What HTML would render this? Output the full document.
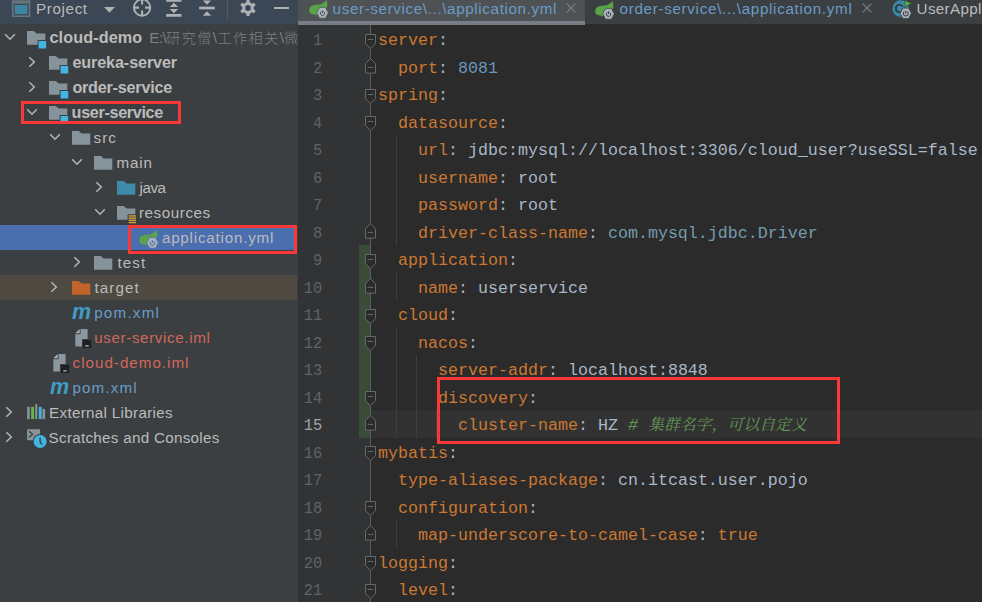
<!DOCTYPE html>
<html lang="zh">
<head>
<meta charset="utf-8">
<title>cloud-demo – application.yml</title>
<style>
*{box-sizing:border-box;margin:0;padding:0}
html,body{width:982px;height:602px;overflow:hidden;background:#2b2b2b}
body{position:relative;font-family:"Liberation Sans","Noto Sans CJK SC",sans-serif;color:#bbbbbb}
svg{position:absolute;overflow:visible}
#side{position:absolute;left:0;top:0;width:298px;height:602px;background:#3c3f41;overflow:hidden}
#head{position:absolute;left:0;top:0;width:298px;height:23.5px;background:#3b4754}
.ttl{position:absolute;left:36.1px;top:-1.6px;font-size:15.2px;letter-spacing:0.62px;line-height:22px;color:#bbbbbb;white-space:nowrap}
.row{position:absolute;left:0;width:298px;height:25px}
.t{position:absolute;top:0;height:26px;line-height:25.6px;font-size:15.2px;white-space:nowrap;color:#bbbbbb}
.t.b{font-weight:bold;font-size:16.2px}
.t.blue{color:#6a9bc6}
.t.red{color:#d1675a}
.gray{color:#7e7e7e;font-weight:300;font-size:14.2px;letter-spacing:1.4px;margin-left:7px}
.gl{font-size:15.4px;letter-spacing:-0.7px;font-weight:normal}
.bs{font-size:15.4px;letter-spacing:0;font-weight:normal;margin:0 0.3px 0 0}
.sel{background:#4b6eaf;width:297px}
.excl{background:#4e4a41;width:297.4px}
.redbox{position:absolute;border:3px solid #fb3838}
#tabs{position:absolute;left:298px;top:0;width:684px;height:25px;overflow:hidden}
#tabbg{position:absolute;left:0;top:0;width:684px;height:24px;background:#3c3f41}
#tab1{position:absolute;left:0;top:0;width:287px;height:25px;background:#4e5254;border-bottom:4.3px solid #777d86}
.tabt{position:absolute;top:-1.6px;font-size:15.2px;line-height:22px;white-space:nowrap;color:#6a9bc6}
.tabx{position:absolute;top:-3px;font-size:16px;line-height:22px;color:#777b7e}
#gut{position:absolute;left:298px;top:25px;width:72.4px;height:577px;background:#313335}
#ed{position:absolute;left:298px;top:25px;width:684px;height:577px;background:#2b2b2b}
.ln{position:absolute;left:298px;width:24.2px;transform:scaleX(0.92);transform-origin:100% 50%;text-align:right;font-family:"Liberation Mono",monospace;font-size:16.67px;line-height:27.5px;height:27.5px;color:#606366}
.ln.cur{color:#a4a3a3}
.cl{position:absolute;left:378px;white-space:pre;font-family:"Liberation Mono",monospace;font-size:16.67px;line-height:27.5px;height:27.5px;color:#a9b7c6}
.k{color:#cc7832}
.n{color:#6897bb}
.c{color:#629755;font-style:italic;font-family:"Liberation Mono","Noto Serif CJK SC",serif}
.cj{font-size:15.9px}
.cls{color:#739cb0}
.curline{position:absolute;left:360px;width:622px;background:#323232}
.vcs{position:absolute;left:359.2px;width:11px;background:#384c38}
.guide{position:absolute;width:1px;background:#3e3e3e}
.foldline{position:absolute;left:369.9px;width:1px;background:#5a5d5f}
</style>
</head>
<body>
<div id="ed"></div><div id="gut"></div><div class="curline" style="top:410.00px;height:27.5px"></div><div class="vcs" style="top:245.00px;height:192.50px"></div><div class="foldline" style="top:25px;height:577px"></div><div class="guide" style="left:396.2px;top:135.00px;height:110.00px"></div><div class="guide" style="left:396.2px;top:272.50px;height:27.50px"></div><div class="guide" style="left:396.2px;top:327.50px;height:110.00px"></div><div class="guide" style="left:416.2px;top:355.00px;height:82.50px"></div><div class="guide" style="left:436.2px;top:410.00px;height:27.50px"></div><div class="guide" style="left:396.2px;top:520.00px;height:27.50px"></div><div class="guide" style="left:396.2px;top:602.50px;height:27.50px"></div><div class="ln" style="top:27.00px">1</div><div class="cl" style="top:27.00px"><span class="k">server</span>:</div><svg style="left:364.9px;top:33.75px" width="11" height="16" viewBox="0 0 11 16"><path d="M0.5 0.5 H10.5 V9.7 L5.5 14.6 L0.5 9.7 Z" fill="#2b2b2b" stroke="#66696b" stroke-width="1"/><path d="M2.6 5.5 H8.4" stroke="#66696b" stroke-width="1"/></svg><div class="ln" style="top:54.50px">2</div><div class="cl" style="top:54.50px">  <span class="k">port</span>: <span class="n">8081</span></div><svg style="left:364.9px;top:57.90px" width="11" height="16" viewBox="0 0 11 16"><path d="M0.5 15.1 H10.5 V5.8 L5.5 0.4 L0.5 5.8 Z" fill="#2b2b2b" stroke="#66696b" stroke-width="1"/><path d="M2.6 9.4 H8.4" stroke="#66696b" stroke-width="1"/></svg><div class="ln" style="top:82.00px">3</div><div class="cl" style="top:82.00px"><span class="k">spring</span>:</div><svg style="left:364.9px;top:88.75px" width="11" height="16" viewBox="0 0 11 16"><path d="M0.5 0.5 H10.5 V9.7 L5.5 14.6 L0.5 9.7 Z" fill="#2b2b2b" stroke="#66696b" stroke-width="1"/><path d="M2.6 5.5 H8.4" stroke="#66696b" stroke-width="1"/></svg><div class="ln" style="top:109.50px">4</div><div class="cl" style="top:109.50px">  <span class="k">datasource</span>:</div><svg style="left:364.9px;top:116.25px" width="11" height="16" viewBox="0 0 11 16"><path d="M0.5 0.5 H10.5 V9.7 L5.5 14.6 L0.5 9.7 Z" fill="#2b2b2b" stroke="#66696b" stroke-width="1"/><path d="M2.6 5.5 H8.4" stroke="#66696b" stroke-width="1"/></svg><div class="ln" style="top:137.00px">5</div><div class="cl" style="top:137.00px">    <span class="k">url</span>: jdbc:mysql://localhost:3306/cloud_user?useSSL=false</div><div class="ln" style="top:164.50px">6</div><div class="cl" style="top:164.50px">    <span class="k">username</span>: root</div><div class="ln" style="top:192.00px">7</div><div class="cl" style="top:192.00px">    <span class="k">password</span>: root</div><div class="ln" style="top:219.50px">8</div><div class="cl" style="top:219.50px">    <span class="k">driver-class-name</span>: <span class="cls">com.mysql.jdbc.Driver</span></div><svg style="left:364.9px;top:222.90px" width="11" height="16" viewBox="0 0 11 16"><path d="M0.5 15.1 H10.5 V5.8 L5.5 0.4 L0.5 5.8 Z" fill="#2b2b2b" stroke="#66696b" stroke-width="1"/><path d="M2.6 9.4 H8.4" stroke="#66696b" stroke-width="1"/></svg><div class="ln" style="top:247.00px">9</div><div class="cl" style="top:247.00px">  <span class="k">application</span>:</div><svg style="left:364.9px;top:253.75px" width="11" height="16" viewBox="0 0 11 16"><path d="M0.5 0.5 H10.5 V9.7 L5.5 14.6 L0.5 9.7 Z" fill="#2b2b2b" stroke="#66696b" stroke-width="1"/><path d="M2.6 5.5 H8.4" stroke="#66696b" stroke-width="1"/></svg><div class="ln" style="top:274.50px">10</div><div class="cl" style="top:274.50px">    <span class="k">name</span>: userservice</div><svg style="left:364.9px;top:277.90px" width="11" height="16" viewBox="0 0 11 16"><path d="M0.5 15.1 H10.5 V5.8 L5.5 0.4 L0.5 5.8 Z" fill="#2b2b2b" stroke="#66696b" stroke-width="1"/><path d="M2.6 9.4 H8.4" stroke="#66696b" stroke-width="1"/></svg><div class="ln" style="top:302.00px">11</div><div class="cl" style="top:302.00px">  <span class="k">cloud</span>:</div><svg style="left:364.9px;top:308.75px" width="11" height="16" viewBox="0 0 11 16"><path d="M0.5 0.5 H10.5 V9.7 L5.5 14.6 L0.5 9.7 Z" fill="#2b2b2b" stroke="#66696b" stroke-width="1"/><path d="M2.6 5.5 H8.4" stroke="#66696b" stroke-width="1"/></svg><div class="ln" style="top:329.50px">12</div><div class="cl" style="top:329.50px">    <span class="k">nacos</span>:</div><svg style="left:364.9px;top:336.25px" width="11" height="16" viewBox="0 0 11 16"><path d="M0.5 0.5 H10.5 V9.7 L5.5 14.6 L0.5 9.7 Z" fill="#2b2b2b" stroke="#66696b" stroke-width="1"/><path d="M2.6 5.5 H8.4" stroke="#66696b" stroke-width="1"/></svg><div class="ln" style="top:357.00px">13</div><div class="cl" style="top:357.00px">      <span class="k">server-addr</span>: localhost:8848</div><div class="ln" style="top:384.50px">14</div><div class="cl" style="top:384.50px">      <span class="k">discovery</span>:</div><svg style="left:364.9px;top:391.25px" width="11" height="16" viewBox="0 0 11 16"><path d="M0.5 0.5 H10.5 V9.7 L5.5 14.6 L0.5 9.7 Z" fill="#2b2b2b" stroke="#66696b" stroke-width="1"/><path d="M2.6 5.5 H8.4" stroke="#66696b" stroke-width="1"/></svg><div class="ln cur" style="top:412.00px">15</div><div class="cl" style="top:412.00px">        <span class="k">cluster-name</span>: HZ <span class="c"># <span class="cj">集群名字，可以自定义</span></span></div><svg style="left:364.9px;top:415.40px" width="11" height="16" viewBox="0 0 11 16"><path d="M0.5 15.1 H10.5 V5.8 L5.5 0.4 L0.5 5.8 Z" fill="#2b2b2b" stroke="#66696b" stroke-width="1"/><path d="M2.6 9.4 H8.4" stroke="#66696b" stroke-width="1"/></svg><div class="ln" style="top:439.50px">16</div><div class="cl" style="top:439.50px"><span class="k">mybatis</span>:</div><svg style="left:364.9px;top:446.25px" width="11" height="16" viewBox="0 0 11 16"><path d="M0.5 0.5 H10.5 V9.7 L5.5 14.6 L0.5 9.7 Z" fill="#2b2b2b" stroke="#66696b" stroke-width="1"/><path d="M2.6 5.5 H8.4" stroke="#66696b" stroke-width="1"/></svg><div class="ln" style="top:467.00px">17</div><div class="cl" style="top:467.00px">  <span class="k">type-aliases-package</span>: cn.itcast.user.pojo</div><div class="ln" style="top:494.50px">18</div><div class="cl" style="top:494.50px">  <span class="k">configuration</span>:</div><svg style="left:364.9px;top:501.25px" width="11" height="16" viewBox="0 0 11 16"><path d="M0.5 0.5 H10.5 V9.7 L5.5 14.6 L0.5 9.7 Z" fill="#2b2b2b" stroke="#66696b" stroke-width="1"/><path d="M2.6 5.5 H8.4" stroke="#66696b" stroke-width="1"/></svg><div class="ln" style="top:522.00px">19</div><div class="cl" style="top:522.00px">    <span class="k">map-underscore-to-camel-case</span>: <span class="k">true</span></div><svg style="left:364.9px;top:525.40px" width="11" height="16" viewBox="0 0 11 16"><path d="M0.5 15.1 H10.5 V5.8 L5.5 0.4 L0.5 5.8 Z" fill="#2b2b2b" stroke="#66696b" stroke-width="1"/><path d="M2.6 9.4 H8.4" stroke="#66696b" stroke-width="1"/></svg><div class="ln" style="top:549.50px">20</div><div class="cl" style="top:549.50px"><span class="k">logging</span>:</div><svg style="left:364.9px;top:556.25px" width="11" height="16" viewBox="0 0 11 16"><path d="M0.5 0.5 H10.5 V9.7 L5.5 14.6 L0.5 9.7 Z" fill="#2b2b2b" stroke="#66696b" stroke-width="1"/><path d="M2.6 5.5 H8.4" stroke="#66696b" stroke-width="1"/></svg><div class="ln" style="top:577.00px">21</div><div class="cl" style="top:577.00px">  <span class="k">level</span>:</div><svg style="left:364.9px;top:583.75px" width="11" height="16" viewBox="0 0 11 16"><path d="M0.5 0.5 H10.5 V9.7 L5.5 14.6 L0.5 9.7 Z" fill="#2b2b2b" stroke="#66696b" stroke-width="1"/><path d="M2.6 5.5 H8.4" stroke="#66696b" stroke-width="1"/></svg><div class="ln" style="top:604.50px">22</div><div class="cl" style="top:604.50px">    <span class="k">cn.itcast</span>: debug</div>
<div id="tabs"><div id="tabbg"></div><div id="tab1"></div><svg style="left:10.9px;top:0.3px" width="20" height="19" viewBox="0 0 20 19"><path d="M17.3 0 C18.4 2.2 18.6 5 18 7.5 L10 13 C7 14.2 3.5 14.6 1.6 13.6 C-0.4 12 -0.4 8.6 1.6 6.6 C4 4.4 8 5.2 11.4 4.2 C14 3.4 16 2 17.3 0Z" fill="#59a348"/><path d="M3.8 14.6 C5.5 15.6 7.5 15.4 9 14.6 L8 13.8 C6.5 14.4 5 14.6 3.8 14.6Z" fill="#59a348"/><path d="M7.7 12.8 L10.6 7.4 H16.4 L19.3 12.8 L16.4 18.2 H10.6 Z" fill="#a9b4bc" stroke="#4e5254" stroke-width="0.7" stroke-linejoin="round"/><path d="M12.3 11.5 A2.15 2.15 0 1 0 14.7 11.5" fill="none" stroke="#4e5254" stroke-width="1.0"/><path d="M13.5 10.4 V13" stroke="#4e5254" stroke-width="1.0"/></svg><span class="tabt" style="left:34.6px;letter-spacing:0.63px">user-service\...\application.yml</span><svg style="left:268px;top:3.0999999999999996px" width="10" height="10" viewBox="0 0 10 10"><path d="M0.6 0.6 L9.4 9.4 M9.4 0.6 L0.6 9.4" stroke="#7c8082" stroke-width="1.15" fill="none"/></svg><svg style="left:297px;top:0.8px" width="20" height="19" viewBox="0 0 20 19"><path d="M17.3 0 C18.4 2.2 18.6 5 18 7.5 L10 13 C7 14.2 3.5 14.6 1.6 13.6 C-0.4 12 -0.4 8.6 1.6 6.6 C4 4.4 8 5.2 11.4 4.2 C14 3.4 16 2 17.3 0Z" fill="#59a348"/><path d="M3.8 14.6 C5.5 15.6 7.5 15.4 9 14.6 L8 13.8 C6.5 14.4 5 14.6 3.8 14.6Z" fill="#59a348"/><path d="M7.7 12.8 L10.6 7.4 H16.4 L19.3 12.8 L16.4 18.2 H10.6 Z" fill="#a9b4bc" stroke="#3c3f41" stroke-width="0.7" stroke-linejoin="round"/><path d="M12.3 11.5 A2.15 2.15 0 1 0 14.7 11.5" fill="none" stroke="#3c3f41" stroke-width="1.0"/><path d="M13.5 10.4 V13" stroke="#3c3f41" stroke-width="1.0"/></svg><span class="tabt" style="left:321.5px;letter-spacing:0.69px">order-service\...\application.yml</span><svg style="left:564.2px;top:3.0999999999999996px" width="10" height="10" viewBox="0 0 10 10"><path d="M0.6 0.6 L9.4 9.4 M9.4 0.6 L0.6 9.4" stroke="#7c8082" stroke-width="1.15" fill="none"/></svg><svg style="left:593.6px;top:-0.5px" width="20" height="19" viewBox="0 0 20 19"><circle cx="8.7" cy="8.6" r="8.3" fill="#3a88a8"/><text x="2.6" y="13.2" font-family="Liberation Sans,sans-serif" font-size="13" font-weight="bold" fill="#2f3a40">C</text><path d="M12.8 0.2 L19.6 3.5 L12.8 6.8Z" fill="#57b33e" stroke="#3c3f41" stroke-width="0.6"/><path d="M8.1 13.3 L10.9 8 H16.6 L19.4 13.3 L16.6 18.6 H10.9 Z" fill="#a9b4bc" stroke="#3c3f41" stroke-width="0.9" stroke-linejoin="round"/><path d="M12.3 11.7 A2.4 2.4 0 1 0 15.2 11.7" fill="none" stroke="#3c3f41" stroke-width="1.1"/><path d="M13.75 10.4 V13.4" stroke="#3c3f41" stroke-width="1.1"/></svg><span class="tabt" style="left:618.6px;color:#bbbbbb;letter-spacing:0.34px">UserApplication.java</span></div>
<div id="side">
<div id="head"><svg style="left:11px;top:0" width="20" height="18" viewBox="0 0 20 18"><rect x="1.7" y="1.3" width="16.8" height="14.9" fill="none" stroke="#69757e" stroke-width="1.6"/><rect x="1" y="0.6" width="18.2" height="3" fill="#69757e"/><rect x="3.7" y="4.9" width="12.8" height="9.2" fill="#3e86a0"/></svg><span class="ttl">Project</span><svg style="left:103.9px;top:6.6px" width="11" height="6" viewBox="0 0 11 6"><path d="M0 0 H11 L5.5 5.8 Z" fill="#afb1b3"/></svg><svg style="left:132px;top:-2px" width="20" height="20" viewBox="0 0 20 20"><circle cx="10.1" cy="9.6" r="8.2" fill="none" stroke="#afb1b3" stroke-width="1.9"/><path d="M10.1 1 V6.6 M10.1 12.6 V18 M1.5 9.6 H7.1 M13.1 9.6 H18.7" stroke="#afb1b3" stroke-width="2.1"/></svg><svg style="left:166px;top:0px" width="16" height="18" viewBox="0 0 16 18"><path d="M0.2 0.4 H15.5 M0.2 15.4 H15.5" stroke="#afb1b3" stroke-width="2.7"/><path d="M7.9 2.8 L12.1 7 H3.7 Z M7.9 13.2 L12.1 9 H3.7 Z" fill="#afb1b3"/></svg><svg style="left:199px;top:0px" width="16" height="18" viewBox="0 0 16 18"><path d="M0.1 8 H15.8" stroke="#afb1b3" stroke-width="2.7"/><path d="M8 4.8 L12.2 0.4 H3.8 Z M8 11.3 L12.2 15.8 H3.8 Z" fill="#afb1b3"/></svg><div style="position:absolute;left:227px;top:0;width:1px;height:20px;background:#555a60"></div><svg style="left:240px;top:0px" width="16" height="16" viewBox="0 0 16 16"><path d="M6.24 2.37 L6.57 0.03 L9.43 0.03 L9.76 2.37 L11.99 3.66 L14.19 2.77 L15.62 5.26 L13.76 6.71 L13.76 9.29 L15.62 10.74 L14.19 13.23 L11.99 12.34 L9.76 13.63 L9.43 15.97 L6.57 15.97 L6.24 13.63 L4.01 12.34 L1.81 13.23 L0.38 10.74 L2.24 9.29 L2.24 6.71 L0.38 5.26 L1.81 2.77 L4.01 3.66Z M10.9 8 A2.9 2.9 0 1 0 5.1 8 A2.9 2.9 0 1 0 10.9 8Z" fill="#afb1b3" fill-rule="evenodd"/></svg><div style="position:absolute;left:273.5px;top:7px;width:15px;height:2.2px;background:#afb1b3"></div></div>
<div class="row " style="top:25px"><svg style="left:2.90px;top:7.199999999999999px" width="14" height="10" viewBox="0 0 14 10"><path d="M2.2 2.2 L7 7.2 L11.8 2.2" fill="none" stroke="#b2b4b6" stroke-width="1.55"/></svg><svg style="left:26.8px;top:5.6px" width="20" height="19" viewBox="0 0 20 19"><path d="M0 0 H6.8 L9.6 2.6 H18.3 V13.7 H0 Z" fill="#87939a"/><rect x="10.6" y="9" width="9" height="9" fill="#3c3f41"/><rect x="11.6" y="10" width="7.6" height="7.5" fill="#40b6e0"/></svg><span class="t b" style="left:49.5px;letter-spacing:0.11px">cloud-demo<span class="gray"><span class="gl">E:\</span>研究僧<span class="bs">\</span>工作相关<span class="bs">\</span>微服务</span></span></div>
<div class="row " style="top:50px"><svg style="left:26.70px;top:5.199999999999999px" width="10" height="14" viewBox="0 0 10 14"><path d="M2.3 2.2 L7.3 7 L2.3 11.8" fill="none" stroke="#b2b4b6" stroke-width="1.55"/></svg><svg style="left:49.25px;top:5.6px" width="20" height="19" viewBox="0 0 20 19"><path d="M0 0 H6.8 L9.6 2.6 H18.3 V13.7 H0 Z" fill="#87939a"/><rect x="10.6" y="9" width="9" height="9" fill="#3c3f41"/><rect x="11.6" y="10" width="7.6" height="7.5" fill="#40b6e0"/></svg><span class="t b" style="left:72.4px;letter-spacing:-0.12px">eureka-server</span></div>
<div class="row " style="top:75px"><svg style="left:26.70px;top:5.199999999999999px" width="10" height="14" viewBox="0 0 10 14"><path d="M2.3 2.2 L7.3 7 L2.3 11.8" fill="none" stroke="#b2b4b6" stroke-width="1.55"/></svg><svg style="left:49.25px;top:5.6px" width="20" height="19" viewBox="0 0 20 19"><path d="M0 0 H6.8 L9.6 2.6 H18.3 V13.7 H0 Z" fill="#87939a"/><rect x="10.6" y="9" width="9" height="9" fill="#3c3f41"/><rect x="11.6" y="10" width="7.6" height="7.5" fill="#40b6e0"/></svg><span class="t b" style="left:72.4px;letter-spacing:-0.23px">order-service</span></div>
<div class="row " style="top:100px"><svg style="left:25.30px;top:7.199999999999999px" width="14" height="10" viewBox="0 0 14 10"><path d="M2.2 2.2 L7 7.2 L11.8 2.2" fill="none" stroke="#b2b4b6" stroke-width="1.55"/></svg><svg style="left:49.25px;top:5.6px" width="20" height="19" viewBox="0 0 20 19"><path d="M0 0 H6.8 L9.6 2.6 H18.3 V13.7 H0 Z" fill="#87939a"/><rect x="10.6" y="9" width="9" height="9" fill="#3c3f41"/><rect x="11.6" y="10" width="7.6" height="7.5" fill="#40b6e0"/></svg><span class="t b" style="left:71.6px;letter-spacing:-0.34px">user-service</span></div>
<div class="row " style="top:125px"><svg style="left:47.70px;top:7.199999999999999px" width="14" height="10" viewBox="0 0 14 10"><path d="M2.2 2.2 L7 7.2 L11.8 2.2" fill="none" stroke="#b2b4b6" stroke-width="1.55"/></svg><svg style="left:71.7px;top:5.6px" width="20" height="19" viewBox="0 0 20 19"><path d="M0 0 H6.8 L9.6 2.6 H18.3 V13.7 H0 Z" fill="#87939a"/></svg><span class="t " style="left:93.5px;letter-spacing:1.07px">src</span></div>
<div class="row " style="top:150px"><svg style="left:70.10px;top:7.199999999999999px" width="14" height="10" viewBox="0 0 14 10"><path d="M2.2 2.2 L7 7.2 L11.8 2.2" fill="none" stroke="#b2b4b6" stroke-width="1.55"/></svg><svg style="left:94.14999999999999px;top:5.6px" width="20" height="19" viewBox="0 0 20 19"><path d="M0 0 H6.8 L9.6 2.6 H18.3 V13.7 H0 Z" fill="#87939a"/></svg><span class="t " style="left:116.6px;letter-spacing:0.82px">main</span></div>
<div class="row " style="top:175px"><svg style="left:93.90px;top:5.199999999999999px" width="10" height="14" viewBox="0 0 10 14"><path d="M2.3 2.2 L7.3 7 L2.3 11.8" fill="none" stroke="#b2b4b6" stroke-width="1.55"/></svg><svg style="left:116.6px;top:5.6px" width="20" height="19" viewBox="0 0 20 19"><path d="M0 0 H6.8 L9.6 2.6 H18.3 V13.7 H0 Z" fill="#3e8aa8"/></svg><span class="t " style="left:139.5px;letter-spacing:-0.46px">java</span></div>
<div class="row " style="top:200px"><svg style="left:92.50px;top:7.199999999999999px" width="14" height="10" viewBox="0 0 14 10"><path d="M2.2 2.2 L7 7.2 L11.8 2.2" fill="none" stroke="#b2b4b6" stroke-width="1.55"/></svg><svg style="left:116.6px;top:5.6px" width="20" height="19" viewBox="0 0 20 19"><path d="M0 0 H6.8 L9.6 2.6 H18.3 V13.7 H0 Z" fill="#87939a"/><rect x="10.6" y="8.2" width="9" height="10" fill="#3c3f41"/><rect x="11.6" y="9.3" width="7.4" height="1.3" fill="#e2a53a"/><rect x="11.6" y="11.5" width="7.4" height="1.3" fill="#e2a53a"/><rect x="11.6" y="13.700000000000001" width="7.4" height="1.3" fill="#e2a53a"/><rect x="11.6" y="15.900000000000002" width="7.4" height="1.3" fill="#e2a53a"/></svg><span class="t " style="left:138.9px;letter-spacing:0.58px">resources</span></div>
<div class="row sel" style="top:225px"><svg style="left:139.15px;top:5.4px" width="20" height="19" viewBox="0 0 20 19"><path d="M17.3 0 C18.4 2.2 18.6 5 18 7.5 L10 13 C7 14.2 3.5 14.6 1.6 13.6 C-0.4 12 -0.4 8.6 1.6 6.6 C4 4.4 8 5.2 11.4 4.2 C14 3.4 16 2 17.3 0Z" fill="#59a348"/><path d="M3.8 14.6 C5.5 15.6 7.5 15.4 9 14.6 L8 13.8 C6.5 14.4 5 14.6 3.8 14.6Z" fill="#59a348"/><path d="M7.7 12.8 L10.6 7.4 H16.4 L19.3 12.8 L16.4 18.2 H10.6 Z" fill="#a6b1bb" stroke="#4b6eaf" stroke-width="0.7" stroke-linejoin="round"/><path d="M12.3 11.5 A2.15 2.15 0 1 0 14.7 11.5" fill="none" stroke="#4b6eaf" stroke-width="1.0"/><path d="M13.5 10.4 V13" stroke="#4b6eaf" stroke-width="1.0"/></svg><span class="t " style="left:161.9px;letter-spacing:0.79px">application.yml</span></div>
<div class="row " style="top:250px"><svg style="left:71.50px;top:5.199999999999999px" width="10" height="14" viewBox="0 0 10 14"><path d="M2.3 2.2 L7.3 7 L2.3 11.8" fill="none" stroke="#b2b4b6" stroke-width="1.55"/></svg><svg style="left:94.14999999999999px;top:5.6px" width="20" height="19" viewBox="0 0 20 19"><path d="M0 0 H6.8 L9.6 2.6 H18.3 V13.7 H0 Z" fill="#87939a"/></svg><span class="t " style="left:117.5px;letter-spacing:1.04px">test</span></div>
<div class="row excl" style="top:275px"><svg style="left:49.10px;top:5.199999999999999px" width="10" height="14" viewBox="0 0 10 14"><path d="M2.3 2.2 L7.3 7 L2.3 11.8" fill="none" stroke="#b2b4b6" stroke-width="1.55"/></svg><svg style="left:71.7px;top:5.6px" width="20" height="19" viewBox="0 0 20 19"><path d="M0 0 H6.8 L9.6 2.6 H18.3 V13.7 H0 Z" fill="#c2632c"/></svg><span class="t " style="left:94.6px;letter-spacing:1.04px">target</span></div>
<div class="row " style="top:300px"><span style="position:absolute;left:72.20px;top:-0.6px;font:italic bold 22.4px/25px 'Liberation Sans',sans-serif;color:#3f9dc4;transform:scaleX(0.96);transform-origin:0 0">m</span><span class="t blue" style="left:94.2px;letter-spacing:1.23px">pom.xml</span></div>
<div class="row " style="top:325px"><svg style="left:72.2px;top:4px" width="21" height="20" viewBox="0 0 21 20"><path d="M8.6 0 H15.6 V17.5 H3.3 V5.2 H8.6 Z" fill="#8a979f"/><path d="M3.3 4.3 L7.7 0 V4.3 Z" fill="#a5b0b7"/><rect x="10" y="10" width="10" height="10" fill="#3c3f41"/><rect x="10.9" y="10.9" width="8.3" height="8" fill="#1f1f1f"/><rect x="13.2" y="16.3" width="3.5" height="1.2" fill="#c4c4c4"/></svg><span class="t red" style="left:94.2px;letter-spacing:0.62px">user-service.iml</span></div>
<div class="row " style="top:350px"><svg style="left:49.75px;top:4px" width="21" height="20" viewBox="0 0 21 20"><path d="M8.6 0 H15.6 V17.5 H3.3 V5.2 H8.6 Z" fill="#8a979f"/><path d="M3.3 4.3 L7.7 0 V4.3 Z" fill="#a5b0b7"/><rect x="10" y="10" width="10" height="10" fill="#3c3f41"/><rect x="10.9" y="10.9" width="8.3" height="8" fill="#1f1f1f"/><rect x="13.2" y="16.3" width="3.5" height="1.2" fill="#c4c4c4"/></svg><span class="t red" style="left:72.6px;letter-spacing:0.99px">cloud-demo.iml</span></div>
<div class="row " style="top:375px"><span style="position:absolute;left:49.75px;top:-0.6px;font:italic bold 22.4px/25px 'Liberation Sans',sans-serif;color:#3f9dc4;transform:scaleX(0.96);transform-origin:0 0">m</span><span class="t blue" style="left:72.4px;letter-spacing:1.13px">pom.xml</span></div>
<div class="row " style="top:400px"><svg style="left:4.30px;top:5.199999999999999px" width="10" height="14" viewBox="0 0 10 14"><path d="M2.3 2.2 L7.3 7 L2.3 11.8" fill="none" stroke="#b2b4b6" stroke-width="1.55"/></svg><svg style="left:26.8px;top:0px" width="20" height="22" viewBox="0 0 20 22"><rect x="0.1" y="6.8" width="2.7" height="12.3" fill="#87939a"/><rect x="4.1" y="6.8" width="3.0" height="12.3" fill="#62b543"/><rect x="8.2" y="4.1" width="2.1" height="15.0" fill="#87939a"/><rect x="11.8" y="6.8" width="2.8" height="12.3" fill="#40b6e0"/><rect x="15.4" y="8.9" width="2.7" height="10.2" fill="#87939a"/></svg><span class="t " style="left:49.1px;letter-spacing:0.31px">External Libraries</span></div>
<div class="row " style="top:425px"><svg style="left:4.30px;top:5.199999999999999px" width="10" height="14" viewBox="0 0 10 14"><path d="M2.3 2.2 L7.3 7 L2.3 11.8" fill="none" stroke="#b2b4b6" stroke-width="1.55"/></svg><svg style="left:26.8px;top:0px" width="21" height="24" viewBox="0 0 21 24"><rect x="0.1" y="4.2" width="13" height="11" fill="#87939a"/><path d="M2 6.2 L5.6 9.2 L2 12.2" fill="none" stroke="#3c3f41" stroke-width="1.3"/><circle cx="13.1" cy="16.5" r="7.4" fill="#3c3f41"/><circle cx="13.1" cy="16.5" r="6.5" fill="#40b6e0"/><path d="M13.1 12.6 V17 L15.3 19.6" fill="none" stroke="#3c3f41" stroke-width="1.4"/></svg><span class="t " style="left:48.6px;letter-spacing:0.29px">Scratches and Consoles</span></div>
</div>
<div class="redbox" style="left:21px;top:101px;width:160px;height:23px"></div><div class="redbox" style="left:128px;top:225px;width:169px;height:29px"></div><div class="redbox" style="left:437px;top:377px;width:403px;height:67px"></div>
</body>
</html>
